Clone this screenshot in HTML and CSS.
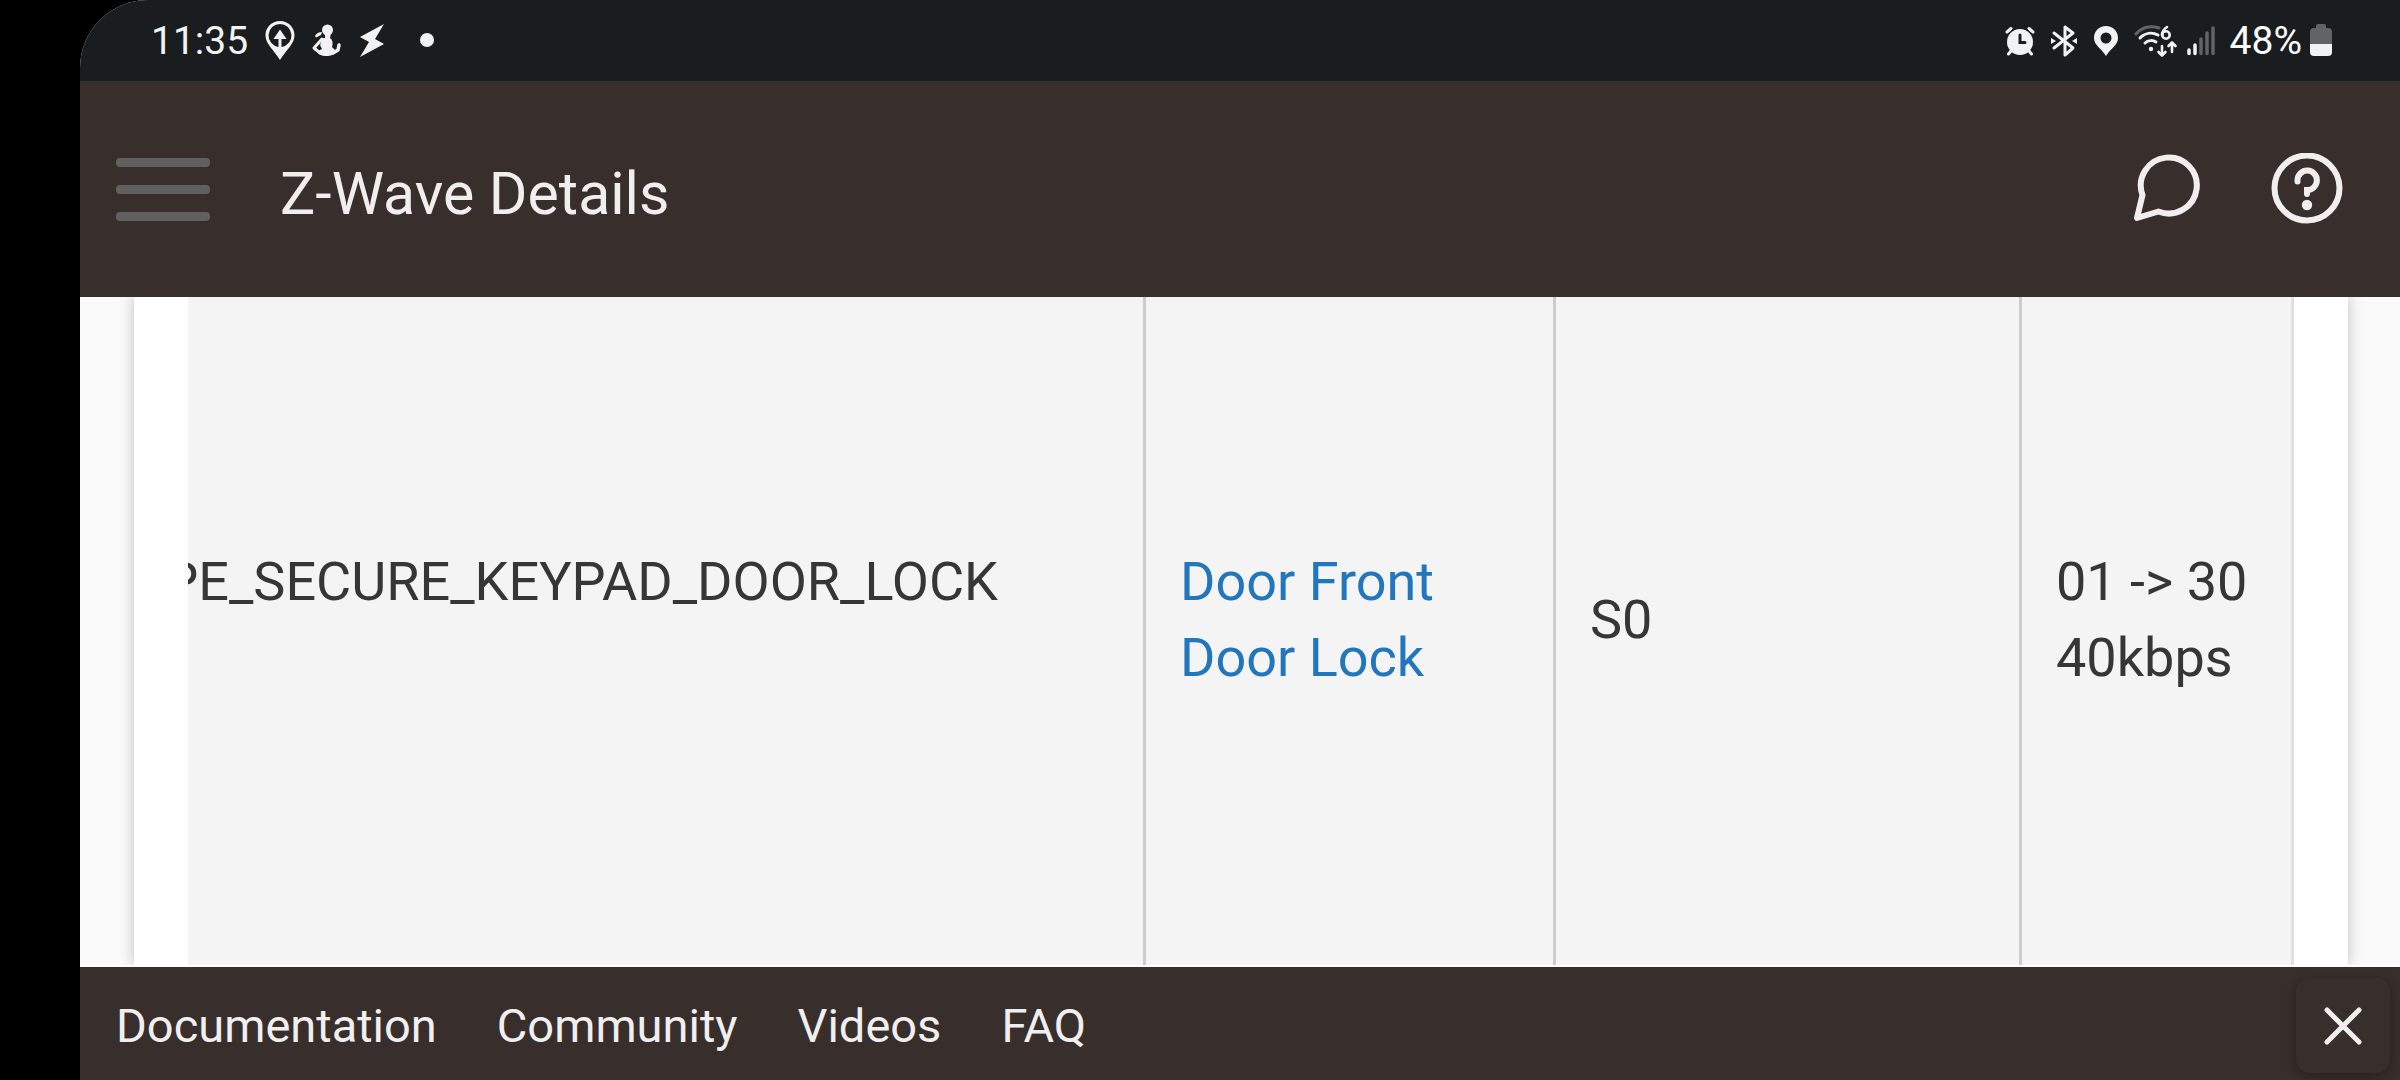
FILE: index.html
```html
<!DOCTYPE html>
<html lang="en">
<head>
  <meta charset="utf-8">
  <meta name="viewport" content="width=device-width, initial-scale=1">
  <title>Z-Wave Details</title>
  <link rel="stylesheet" href="styles.css">
</head>
<body>
  <div class="screen">
    <div class="status-bar">
      <span class="clock">11:35</span>
      <div class="notifications">
        <svg width="30" height="40" viewBox="0 0 30 40">
          <path fill="#f2f2f2" fill-rule="evenodd" d="M15 1C6.500 1 .5 7.500 .5 15.500C.5 24 9 30 15 40C21 30 29.500 24 29.500 15.500C29.500 7.500 23.500 1 15 1ZM15 4A11.500 11.500 0 0 1 16.500 26.900V19H21.500L15 9.500L8.500 19H13.500V26.900A11.500 11.500 0 0 1 15 4Z"/>
        </svg>
        <svg width="30" height="40" viewBox="0 0 30 40">
          <g fill="none" stroke="#f2f2f2" stroke-linecap="round" stroke-linejoin="round">
            <path stroke-width="3" d="M10 19L2 28L8 33"/>
            <path stroke-width="3.500" d="M21 33L26 30L27 25"/>
          </g>
          <path fill="#f2f2f2" d="M3 16Q5 12 10 12L9 15L4 17.500Z"/>
          <circle cx="15.500" cy="10" r="5.500" fill="#f2f2f2"/>
          <path fill="#f2f2f2" d="M13 13H19L18 18C21 20 21 24 20 27L24 31C22 35 19 36 14.500 36C9 36 6 34 6 31L10 29L8 25L11 18H13Z"/>
        </svg>
        <svg width="26" height="40" viewBox="0 0 26 40">
          <path fill="#f2f2f2" d="M25 4L1 17L10 22L1 37L25 24L16 19Z"/>
        </svg>
        <svg class="more" width="14" height="40" viewBox="0 0 14 40">
          <circle cx="7" cy="20" r="7" fill="#f2f2f2"/>
        </svg>
      </div>
      <div class="system-icons">
        <!-- alarm -->
        <svg width="30" height="40" viewBox="0 0 30 40">
          <path fill="none" stroke="#f2f2f2" stroke-width="3" stroke-linecap="round" d="M2 12L6 8.500M28 12L24 8.500M6 31L3.500 34M24 31L26.500 34"/>
          <circle cx="15" cy="22" r="13" fill="#f2f2f2"/>
          <path fill="none" stroke="#1a1d1f" stroke-width="3" stroke-linecap="round" d="M15 15V22.500H20"/>
        </svg>
        <!-- bluetooth -->
        <svg width="28" height="40" viewBox="0 0 28 40">
          <path fill="none" stroke="#f2f2f2" stroke-width="3" stroke-linecap="round" stroke-linejoin="round" d="M4 13L23 28L15 35V7L23 13L4 28"/>
          <path fill="#f2f2f2" d="M1 18L6 21L1 24ZM27 18L22 21L27 24Z"/>
        </svg>
        <!-- location -->
        <svg width="26" height="40" viewBox="0 0 26 40">
          <path fill="#f2f2f2" fill-rule="evenodd" d="M13 6C6 6 1 11 1 18C1 25 8 28 13 36C18 28 25 25 25 18C25 11 20 6 13 6ZM13 12.500A5.500 5.500 0 1 1 13 23.500A5.500 5.500 0 1 1 13 12.500Z"/>
        </svg>
        <!-- wifi 6 -->
        <svg class="wifi" width="44" height="40" viewBox="0 0 44 40">
          <g fill="none" stroke="#f2f2f2" stroke-width="3" stroke-linecap="round" stroke-linejoin="round">
            <path stroke="#616466" d="M2 14C8 7 17 5 25 8"/>
            <path d="M6 18C11 13 18 12 24 15M11 23C14 20 19 20 22 22"/>
            <path stroke-width="2.600" d="M33 7C30 9 28 12 28 15"/>
            <circle cx="32" cy="15" r="3.700" stroke-width="2.600"/>
            <path stroke-width="2.600" d="M28 26V35M24.500 32L28 35.500L31.500 32M38 32V23M34.500 26L38 22.500L41.500 26"/>
          </g>
          <circle cx="17" cy="29" r="2.200" fill="#f2f2f2"/>
        </svg>
        <!-- signal -->
        <svg width="28" height="40" viewBox="0 0 28 40">
          <path fill="none" stroke="#f2f2f2" stroke-width="3.500" stroke-linecap="round" d="M2 30V33.500M8 25V33.500"/>
          <path fill="none" stroke="#616466" stroke-width="3.500" stroke-linecap="round" d="M14 19V33.500M20 13V33.500M26 8V33.500"/>
        </svg>
        <span class="battery-level">48%</span>
        <!-- battery -->
        <svg class="battery" width="22" height="40" viewBox="0 0 22 40">
          <path fill="#616466" d="M6 8V6Q6 4 8 4H14Q16 4 16 6V8H18Q22 8 22 12V24H0V12Q0 8 4 8Z"/>
          <path fill="#f2f2f2" d="M0 24H22V32Q22 36 18 36H4Q0 36 0 32Z"/>
        </svg>
      </div>
    </div>

    <header class="app-header">
      <button class="menu-button" type="button" aria-label="Menu">
        <span></span><span></span><span></span>
      </button>
      <h1>Z-Wave Details</h1>
      <div class="header-actions">
        <button type="button" aria-label="Messages">
          <svg width="72" height="72" viewBox="0 0 72 72">
            <path fill="none" stroke="#f0eeee" stroke-width="6" stroke-linejoin="round" d="M8.500 42A28 28 0 1 1 24.500 58.500L3 65Z"/>
          </svg>
        </button>
        <button type="button" aria-label="Help">
          <svg width="72" height="72" viewBox="0 0 72 72">
            <g fill="none" stroke="#f0eeee" stroke-width="6" stroke-linecap="round">
              <circle cx="36" cy="35" r="32.500"/>
              <path d="M26.500 28.500V27A9.700 9.700 0 1 1 36 37V41"/>
            </g>
            <circle cx="36" cy="52" r="5.200" fill="#f0eeee"/>
          </svg>
        </button>
      </div>
    </header>

    <main class="content">
      <div class="card">
        <div class="table-scroll">
          <table class="device-table">
            <tbody>
              <tr>
                <td class="col-type">PE_SECURE_KEYPAD_DOOR_LOCK<br>&nbsp;</td>
                <td class="col-device"><a href="#">Door Front<br>Door Lock</a></td>
                <td class="col-security">S0</td>
                <td class="col-route">01 -&gt; 30<br>40kbps</td>
              </tr>
            </tbody>
          </table>
        </div>
      </div>
    </main>

    <footer class="app-footer">
      <nav class="footer-links">
        <a href="#">Documentation</a>
        <a href="#">Community</a>
        <a href="#">Videos</a>
        <a href="#">FAQ</a>
      </nav>
      <button class="close-button" type="button" aria-label="Close">
        <svg width="40" height="40" viewBox="0 0 40 40">
          <path stroke="#f0eeee" stroke-width="5" stroke-linecap="round" d="M4 4L36 36M36 4L4 36"/>
        </svg>
      </button>
    </footer>
  </div>
</body>
</html>
```
FILE: styles.css
```css
* { box-sizing: border-box; }

body {
  margin: 0;
  background: #000;
  font-family: Roboto, sans-serif;
}

button {
  padding: 0;
  border: 0;
  background: none;
}

svg { display: block; flex: none; }

.screen {
  display: flex;
  flex-direction: column;
  height: 100vh;
  margin-left: 80px;
  overflow: hidden;
  border-top-left-radius: 68px;
  background: #fafafa;
}

/* status bar */
.status-bar {
  display: flex;
  flex: none;
  padding: 20px 68px 19px 71px;
  background: #1a1d1f;
  color: #f2f2f2;
  font-size: 39px;
  line-height: 42px;
}
.notifications { display: flex; gap: 17px; margin-left: 17px; }
.more { margin-left: 18px; }
.system-icons { display: flex; gap: 15px; margin-left: auto; }
.wifi { margin-right: -6px; }
.battery-level { margin-right: -7px; color: #fff; }

/* header */
.app-header {
  display: flex;
  flex: none;
  align-items: flex-start;
  height: 216px;
  padding: 72px 57px 0 36px;
  background: #382e2c;
}
.menu-button {
  display: flex;
  flex-direction: column;
  justify-content: center;
  gap: 18px;
  width: 94px;
  height: 72px;
}
.menu-button span {
  width: 100%;
  height: 9px;
  border-radius: 4px;
  background: #616060;
}
.app-header h1 {
  margin: 0 0 0 70px;
  color: #f0eeee;
  font-size: 59px;
  font-weight: 400;
  line-height: 82px;
}
.header-actions { display: flex; gap: 65px; margin-left: auto; }

/* content */
.content {
  flex: 1;
  min-height: 0;
  padding: 0 52px 0 54px;
  overflow: hidden;
  border-bottom: 2px solid #fff;
}
.card {
  height: 100%;
  padding: 0 54px;
  background: #fff;
  box-shadow: 0 0 14px rgba(0, 0, 0, 0.24);
}
/* the table is scrolled to its right end */
.table-scroll {
  display: flex;
  justify-content: flex-end;
  height: 100%;
  overflow: hidden;
  border-right: 3px solid #e0e0e0;
}
.device-table {
  flex: none;
  height: 100%;
  border-collapse: separate;
  border-spacing: 0;
  background: #f4f4f4;
  color: #363636;
  font-size: 54px;
  line-height: 76px;
}
.device-table td {
  padding: 0 34px 23px;
  border-left: 3px solid #ccc;
  white-space: nowrap;
}
.device-table a { color: #2176bd; text-decoration: none; }
.device-table .col-type { padding-right: 145px; border-left: 0; }
.col-device { width: 410px; }
.col-security { width: 466px; }
.col-route { width: 272px; }

/* footer */
.app-footer {
  display: flex;
  flex: none;
  align-items: center;
  justify-content: space-between;
  padding: 11px 10px 7px 36px;
  background: #382e2c;
}
.footer-links { display: flex; gap: 60px; }
.footer-links a {
  color: #f0eeee;
  font-size: 47px;
  line-height: 56px;
  text-decoration: none;
}
.close-button {
  display: flex;
  align-items: center;
  justify-content: center;
  width: 94px;
  height: 95px;
  border-radius: 14px;
  box-shadow: 0 3px 12px rgba(0, 0, 0, 0.3);
}
```
